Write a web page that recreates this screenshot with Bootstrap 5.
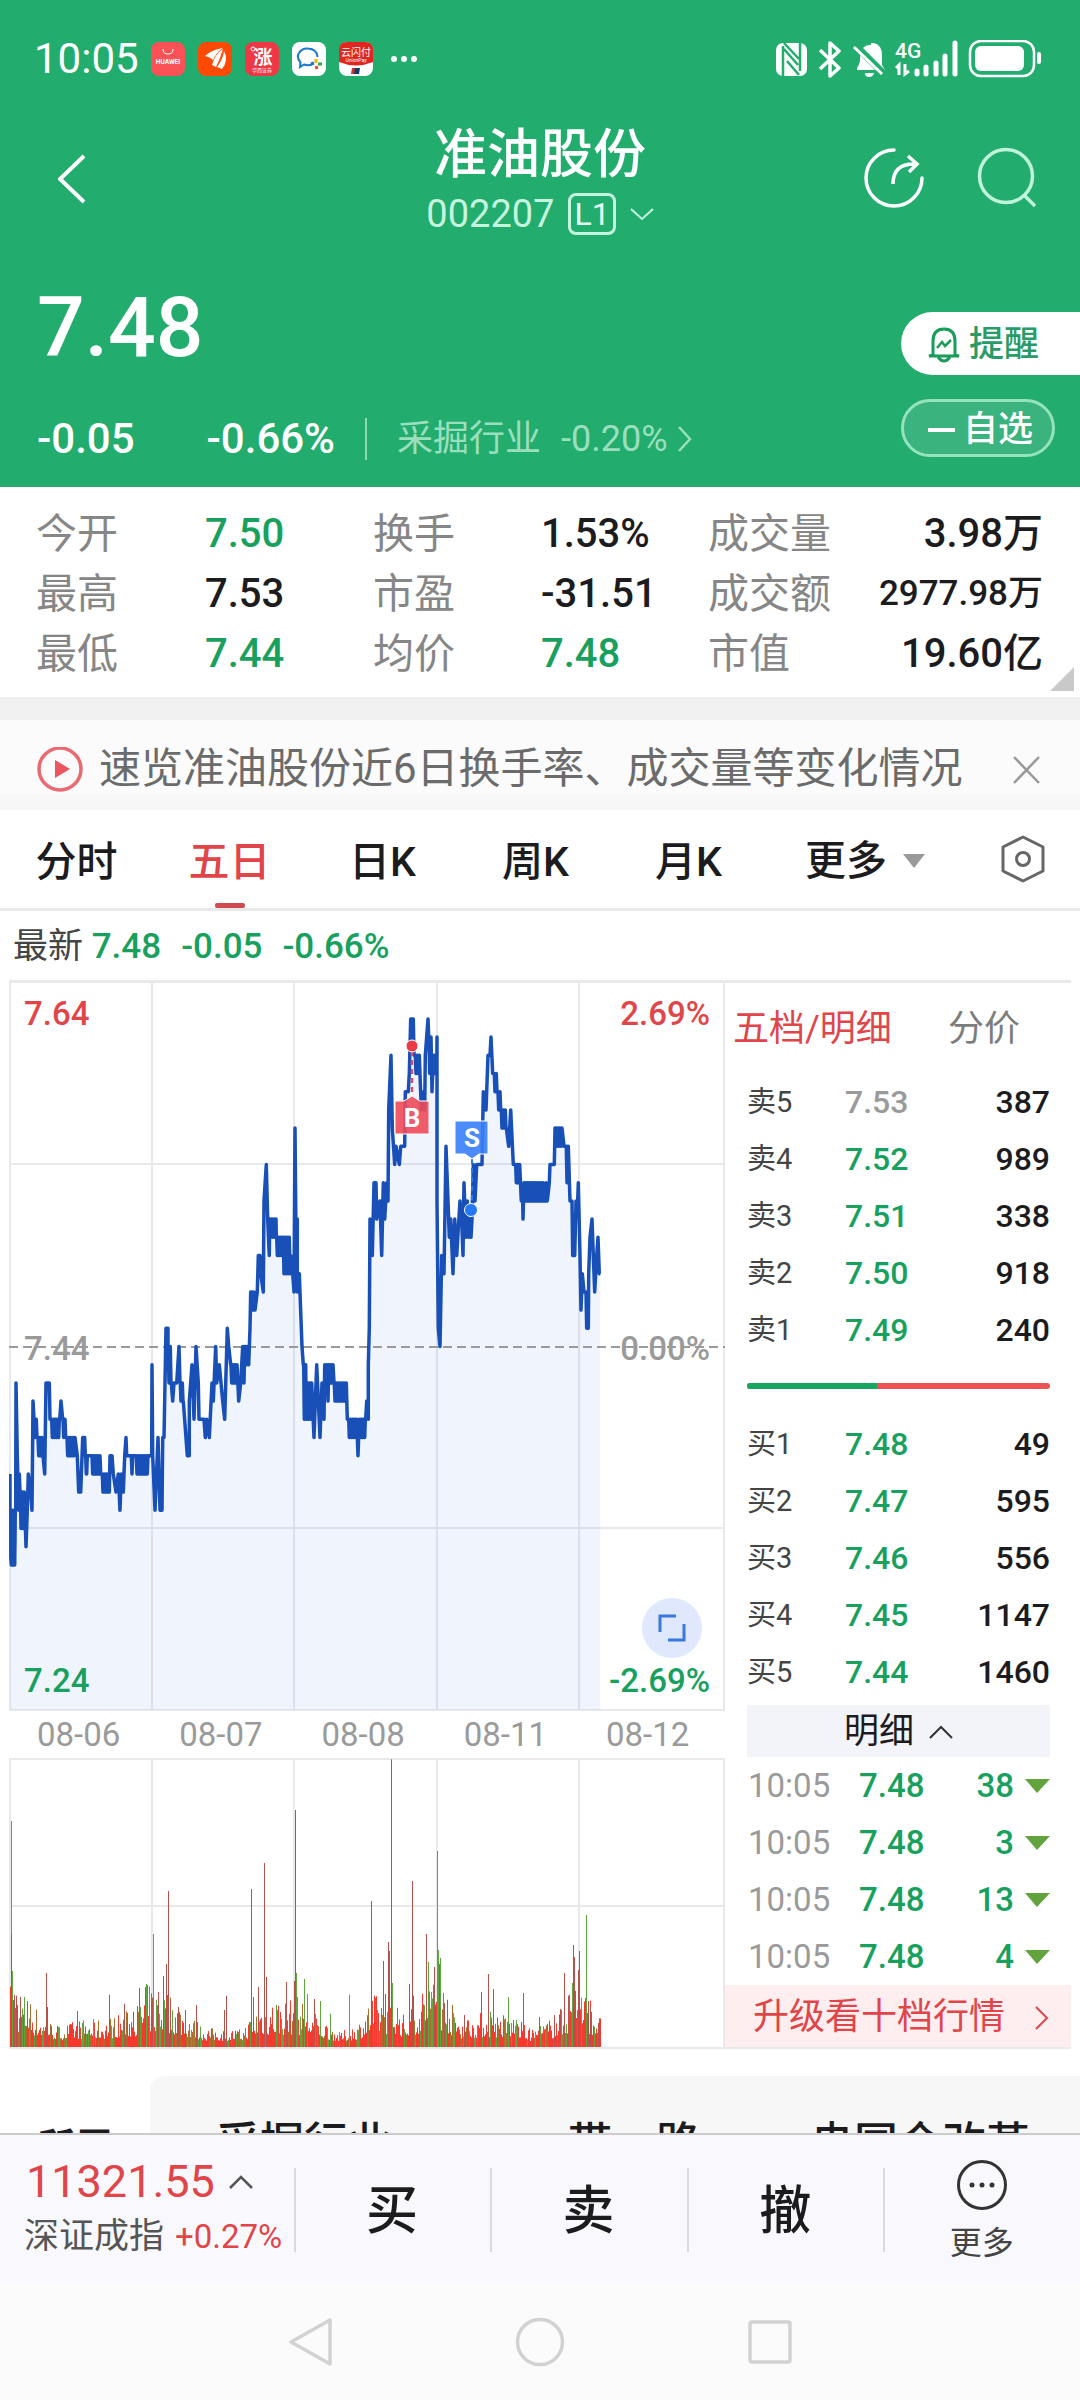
<!DOCTYPE html>
<html lang="zh-CN">
<head>
<meta charset="utf-8">
<meta name="viewport" content="width=device-width, initial-scale=1">
<title>准油股份 002207</title>
<link href="https://cdn.jsdelivr.net/npm/bootstrap@5.3.0/dist/css/bootstrap.min.css" rel="stylesheet">
<style>
:root{--up:#e0454a;--down:#18a05e;--brand:#22ac6e;--line:#e9e9eb;--ink:#1c1c1e}
body{font-family:Roboto,"Noto Sans CJK SC",sans-serif;color:var(--ink);background:#fff;line-height:1.2}
button,a{color:inherit}
button{background:none;border:0;padding:0;line-height:inherit}
svg{display:block;flex:none}
.up{color:var(--up)}.down{color:var(--down)}.dim{color:#9a9a9a}.soft{color:#7c7c7c}.label-ink{color:#444;font-weight:400}
.num{font-weight:500}
.app{height:100vh}
.top-area{background:var(--brand);color:#fff}
.status{height:96px;padding:22px 38px 0 34px;font-size:42px}
.apps{gap:13px;margin-left:12px}
.titlebar{height:176px;padding:0 44px}
.side-l,.side-r{flex:1 1 0;padding-top:50px}
.side-l button{margin:8px 0 0 14px}
.side-r{gap:52px}
.stock-head{padding-top:27px}
.stock-name{font-size:53px;line-height:64px;font-weight:500;margin:0}
.stock-code{font-size:38px;line-height:48px;color:#c6f5df;gap:14px;margin-top:3px}
.level{border:3px solid #c6f5df;border-radius:8px;font-size:32px;line-height:36px;padding:0 3px;color:#e5fff3}
.quote{padding-left:37px;height:215px}
.last-price{font-size:84px;line-height:100px;font-weight:500;margin-top:6px}
.delta{font-size:42px;line-height:50px;margin-top:36px}
.delta-pct{margin-left:72px}
.sector{color:#9adfbd;font-size:36px;margin-left:30px;padding-left:32px;position:relative;gap:20px;text-decoration:none}
.sector::before{content:"";position:absolute;left:0;top:4px;height:42px;border-left:2px solid #8ed9b5}
.sector svg{margin-left:-10px}
.pills{padding-top:40px;gap:24px}
.pill-a{background:#fff;color:#2a9b67;border-radius:32px 0 0 32px;width:179px;height:63px;font-size:35px;padding:2px 0 0 26px;gap:8px;font-weight:500}
.pill-b{border:3px solid #94e3bd;background:#3bb37e;border-radius:30px;width:154px;height:58px;font-size:35px;margin-right:25px;gap:8px;padding:3px 0 0 24px;font-weight:500}
.pill-b i{width:27px;height:4px;background:#fff}
.stats{padding:17px 37px 13px 36px;font-size:40px;grid-template-columns:169px 168px 168px 167px 1fr auto;position:relative}
.stats dt,.stats dd{margin:0;line-height:60px;font-weight:400}
.stats dt{color:#868686;font-size:41px}
.stats dd{font-weight:500}
.stats dd:nth-of-type(3n){text-align:right}
.stats .tight{font-size:35px}
.corner{position:absolute;right:6px;bottom:6px}
.band{height:23px;background:#f0f0f0}
.notice{background:#fbfbfb;border-bottom:15px solid #f7f7f7;height:90px;padding:24px 40px 0 37px;font-size:42px;color:#6b6b6b}
.tabs-row{height:101px;border-bottom:3px solid var(--line);font-size:41px}
.tabs-row button{flex:153 1 0;line-height:104px;height:98px;position:relative;font-weight:500}
.tabs-row .more{flex-grow:200}
.tabs-row .gear{flex-grow:115}
.tabs-row .on::after{content:"";position:absolute;left:50%;margin-left:-15px;bottom:0;width:30px;height:5px;border-radius:2px;background:#d04a50}
.newest{height:69px;padding:3px 13px 0;font-size:35px;gap:20px}
.board{margin:0 9px;border-top:3px solid var(--line);border-bottom:2px solid var(--line)}
.charts{flex:716 1 0;min-width:0}
.book{flex:346 1 0;min-width:0}
.chart-box{position:relative}
.chart-box svg{width:100%;height:auto}
.lbl{position:absolute;font-size:33px;line-height:40px;font-weight:500}
.l{left:15px}.r{right:15px}.t{top:11px}.m{top:346px}.b{bottom:10px}
.full{position:absolute;right:23px;bottom:53px;width:60px;height:60px;border-radius:50%;background:#dfe8fd}
.dates{height:47px;font-size:33px;line-height:48px;color:#9a9a9a}
.dates span{flex:142 1 0;padding-left:28px}
.dates span:last-child{flex-grow:148}
.book-tabs{font-size:36px;height:91px;padding:2px 51px 0 8px}
.depth{width:303px;margin-left:22px;font-size:32px}
.depth td{padding:0;line-height:57px;font-weight:500}
.depth td:first-child{width:98px;color:#444;font-size:29px;font-weight:400}
.depth td:last-child{text-align:right}
.balance{height:6px;border-radius:3px;margin:24px 21px 27px 22px;background:#ee5253}
.balance div{background:#18a560}
.ticks-head{background:#f3f4f9;height:52px;margin:4px 21px 0 22px;padding-top:2px;font-size:35px;gap:15px;width:303px}
.ticks{margin:0 21px 0 23px;font-size:33px;width:302px}
.ticks td{padding:0;line-height:57px;font-weight:500}
.ticks td:first-child{width:111px;font-weight:400}
.ticks td:nth-child(3){text-align:right}
.ticks td:last-child{width:36px}
.upgrade{background:#feeeef;height:62px;font-size:36px;padding:4px 22px 0 28px;text-decoration:none}
.related{margin-top:27px}
.related h2{width:150px;font-size:38px;line-height:46px;padding:48px 0 0 37px;font-weight:700;margin:0}
.related ul{background:#f7f7f7;border-radius:14px 0 0 0;font-size:44px;line-height:60px;padding:38px 6px 0 0;font-weight:500;margin:0}
.related li{flex:1 1 0;text-align:center;white-space:nowrap}
.trade{background:#f9f9fd;border-top:2px solid #ccc;height:150px}
.trade .idx{flex:0 0 27.2%;padding:19px 0 0 24px}
.idx-v{font-size:45px;line-height:55px;gap:14px;padding-left:2px}
.idx-n{font-size:35px;line-height:55px;gap:11px;color:#555}
.idx-n .up{font-size:33px}
.trade .act{flex:197 1 0;font-size:52px;position:relative;font-weight:500;padding-top:6px}
.trade .act::before{content:"";position:absolute;left:0;top:33px;height:84px;border-left:2px solid #dadade}
.trade .act.small-act{font-size:32px;line-height:40px;color:#444;gap:12px;font-weight:400;padding-top:4px}
.sysnav{background:#fbfbfb;height:117px;padding:0 287px}
</style>
</head>
<body>
<div class="app d-flex flex-column overflow-hidden">
<header class="top-area">
  <div class="status d-flex align-items-center">
    <span>10:05</span>
    <div class="apps d-flex">
      <svg width="34" height="34" viewBox="0 0 34 34"><rect width="34" height="34" rx="8" fill="#fb5257"/><path d="M12 7q0 5 5 5t5-5" fill="none" stroke="#fff" stroke-width="1"/><text x="17" y="22" font-size="6.5" font-weight="700" fill="#fff" text-anchor="middle">HUAWEI</text></svg>
      <svg width="34" height="34" viewBox="0 0 34 34"><rect width="34" height="34" rx="8" fill="#ff4a06"/><path d="M7 14Q15 7 25 6Q18 11 15 18Q12 15 7 14" fill="#fff"/><path d="M14 23Q17 12 25 7Q22 17 18 25Z" fill="#fff"/><path d="M19 25Q25 17 26 9Q31 18 24 27Z" fill="#fff"/></svg>
      <svg width="34" height="34" viewBox="0 0 34 34"><rect width="34" height="34" rx="8" fill="#ee3846"/><text x="18" y="22" font-size="19" font-weight="700" fill="#fff" text-anchor="middle">涨</text><circle cx="8" cy="7" r="2" fill="none" stroke="#fff"/><text x="17" y="30" font-size="5" fill="#fff" text-anchor="middle">华西证券</text></svg>
      <svg width="34" height="34" viewBox="0 0 34 34"><rect width="34" height="34" rx="8" fill="#fff"/><path d="M20 22.500Q16 24 12 22.500L8 25L8.500 20.500Q4 15 7 11Q10 6 16 6.500Q25 7 25.500 15" fill="none" stroke="#1878cd" stroke-width="2"/><path d="M24 17v4" stroke="#f8b400" stroke-width="3"/><path d="M26 22h4" stroke="#33a852" stroke-width="3"/><path d="M24 24l1 3" stroke="#ef4a31" stroke-width="3"/><path d="M19 22l3-1" stroke="#1878cd" stroke-width="3"/></svg>
      <svg width="34" height="34" viewBox="0 0 34 34"><rect width="34" height="34" rx="8" fill="#fff"/><path d="M8 0h18q8 0 8 8v12q-17 7-34 0V8q0-8 8-8" fill="#e0261f"/><text x="17" y="14" font-size="10" fill="#fff" text-anchor="middle">云闪付</text><text x="17" y="20" font-size="5" fill="#fff" text-anchor="middle">UnionPay</text><path d="M13 26h4l-1 6h-4z" fill="#c33"/><path d="M16 26h5l-1 6h-5z" fill="#123a6b"/></svg>
    </div>
    <svg class="ms-3" width="30" height="8"><g fill="#fff"><circle cx="5" cy="4" r="3"/><circle cx="15" cy="4" r="3"/><circle cx="25" cy="4" r="3"/></g></svg>
    <svg class="ms-auto" width="266" height="38" viewBox="776 39 266 38">
      <rect x="776" y="42" width="31" height="33" rx="7" fill="#fff"/><path d="M783 45V75M784 48L798 64M787 60L799 74M784 42L799 58M800 42V70" stroke="#22ac6e" stroke-width="2.500" fill="none"/>
      <path d="M820 49L839 67L830 75V42L839 50L820 68" fill="none" stroke="#fff" stroke-width="3.500" stroke-linejoin="round"/>
      <path d="M857 69V67Q861 62 860 53Q863 43 871 44V42H874Q882 44 882 54V64L885 69Z" fill="#fff"/><path d="M853 42L886 75" stroke="#22ac6e" stroke-width="7"/><path d="M854 46L882 73" stroke="#fff" stroke-width="3"/><path d="M865 72h9q-1 4-5 4t-4-4" fill="#fff"/>
      <text x="895" y="57" font-size="21" font-weight="500" fill="#fff">4G</text>
      <path d="M899 74V64L896 67M905 63V73L909 70" stroke="#fff" stroke-width="3" fill="none"/>
      <path d="M917 70V73M926 66V73M936 62V73M945 55V73M955 42V73" stroke="#fff" stroke-width="5" stroke-linecap="round"/>
      <rect x="970" y="40" width="64" height="35" rx="11" fill="none" stroke="#fff" stroke-width="2.500"/><rect x="975" y="45" width="49" height="25" rx="6" fill="#fff"/><path d="M1039 53V61" stroke="#fff" stroke-width="4" stroke-linecap="round"/>
    </svg>
  </div>
  <div class="titlebar d-flex align-items-start">
    <div class="side-l"><button aria-label="返回"><svg width="28" height="50" viewBox="0 0 28 50"><path d="M26 2L2 25L26 48" fill="none" stroke="#fff" stroke-width="4"/></svg></button></div>
    <div class="stock-head text-center">
      <h1 class="stock-name">准油股份</h1>
      <div class="stock-code d-flex align-items-center justify-content-center"><span>002207</span><span class="level">L1</span><svg width="24" height="14" viewBox="0 0 24 14"><path d="M1 2L12 12L23 2" fill="none" stroke="#c6f5df" stroke-width="2"/></svg></div>
    </div>
    <div class="side-r d-flex justify-content-end">
      <button aria-label="分享"><svg width="60" height="62" viewBox="0 0 60 62"><path d="M30 4A28 28 0 1 0 58 32" fill="none" stroke="#fff" stroke-width="3.500" stroke-linecap="round"/><path d="M29 38Q29 18 50 18M44 10L53 18L45 26" fill="none" stroke="#fff" stroke-width="3.500"/></svg></button>
      <button aria-label="搜索"><svg width="60" height="62" viewBox="0 0 60 62"><circle cx="30" cy="30" r="26.500" fill="none" stroke="#bff3da" stroke-width="3.500"/><path d="M49 50L59 60" stroke="#bff3da" stroke-width="3.500"/></svg></button>
    </div>
  </div>
  <div class="quote d-flex">
    <div class="flex-grow-1">
      <div class="last-price">7.48</div>
      <div class="delta d-flex">
        <span class="num">-0.05</span><span class="num delta-pct">-0.66%</span>
        <a class="sector d-flex align-items-center" href="#sector"><span>采掘行业</span><span>-0.20%</span><svg width="14" height="26" viewBox="0 0 14 26"><path d="M1 1L12 13L1 25" fill="none" stroke="#9adfbd" stroke-width="2.500"/></svg></a>
      </div>
    </div>
    <div class="pills d-flex flex-column">
      <button class="pill-a d-flex align-items-center"><svg width="34" height="36" viewBox="0 0 34 36"><path d="M6 28V14Q6 2 17 2T28 14V28L32 29H2L6 28" fill="none" stroke="#1b9c5d" stroke-width="3"/><path d="M11 30Q17 38 23 30" fill="none" stroke="#1b9c5d" stroke-width="3"/><path d="M10 21L15 15L18 19L24 13" fill="none" stroke="#1b9c5d" stroke-width="2.500"/></svg>提醒</button>
      <button class="pill-b d-flex align-items-center"><i></i>自选</button>
    </div>
  </div>
</header>
<main class="flex-fill overflow-hidden">
  <dl class="stats d-grid mb-0">
    <dt>今开</dt><dd class="down">7.50</dd><dt>换手</dt><dd>1.53%</dd><dt>成交量</dt><dd>3.98万</dd>
    <dt>最高</dt><dd>7.53</dd><dt>市盈</dt><dd>-31.51</dd><dt>成交额</dt><dd class="tight">2977.98万</dd>
    <dt>最低</dt><dd class="down">7.44</dd><dt>均价</dt><dd class="down">7.48</dd><dt>市值</dt><dd>19.60亿</dd>
    <svg class="corner" width="24" height="24"><path d="M24 0V24H0Z" fill="#c9c9c9"/></svg>
  </dl>
  <div class="band"></div>
  <div class="notice d-flex align-items-center">
    <svg width="46" height="46" viewBox="0 0 46 46"><circle cx="23" cy="22" r="21" fill="none" stroke="#ea6a72" stroke-width="3.500"/><path d="M18 13L33 22L18 31Z" fill="#ea5560"/></svg>
    <span class="ms-3">速览准油股份近6日换手率、成交量等变化情况</span>
    <button class="ms-auto" aria-label="关闭"><svg width="27" height="28" viewBox="0 0 27 28"><path d="M1 1L26 27M26 1L1 27" stroke="#999" stroke-width="2.500"/></svg></button>
  </div>
  <nav class="tabs-row d-flex">
    <button>分时</button><button class="on up">五日</button><button>日K</button><button>周K</button><button>月K</button>
    <button class="more d-flex align-items-center justify-content-center pt-1">更多<svg class="ms-3" width="22" height="14"><path d="M0 0H22L11 14Z" fill="#999"/></svg></button>
    <button class="gear d-flex align-items-center justify-content-center" aria-label="设置"><svg width="44" height="48" viewBox="0 0 44 48"><path d="M22 2L42 12V36L22 46L2 36V12Z" fill="none" stroke="#666" stroke-width="3" stroke-linejoin="round"/><circle cx="22" cy="24" r="6.500" fill="none" stroke="#666" stroke-width="3"/></svg></button>
  </nav>
  <div class="newest d-flex align-items-center down num"><span><span class="label-ink">最新</span>&nbsp;7.48</span><span>-0.05</span><span>-0.66%</span></div>
  <section class="board d-flex">
    <div class="charts">
      <div class="chart-box">
        <svg viewBox="9 982 716 728" id="price">
          <path d="M10 982V1709M152 982V1709M294 982V1709M437 982V1709M579 982V1709M724 982V1709M9 1163H725M9 1527H725M9 1709H725" stroke="#e9e9eb" stroke-width="2" fill="none"/>
          <path id="area" fill="#2a6fe8" fill-opacity=".075"/>
          <path d="M9 1346H725" stroke="#9a9a9a" stroke-width="2" stroke-dasharray="9 5"/>
          <path id="line" fill="none" stroke="#1850b8" stroke-width="3.500" stroke-linejoin="round"/>
          <path d="M412 1050V1096" stroke="#d54f6c" stroke-width="2.500" stroke-dasharray="5 4"/><circle cx="412" cy="1045" r="6" fill="#ee3a45" stroke="#fff"/>
          <path d="M395 1100H404L412 1095L420 1100H429V1133H395Z" fill="#ee4a5a" fill-opacity=".9" stroke="#fff"/><text x="412" y="1126" font-size="26" font-weight="700" fill="#fff" text-anchor="middle">B</text>
          <path d="M472 1158V1204" stroke="#2a78f0" stroke-width="2" stroke-dasharray="5 4"/><circle cx="471" cy="1209" r="6.500" fill="#2378f5" stroke="#fff"/>
          <path d="M455 1120H488V1153H479L472 1158L465 1153H455Z" fill="#3880fa" fill-opacity=".9" stroke="#fff"/><text x="472" y="1146" font-size="26" font-weight="700" fill="#fff" text-anchor="middle">S</text>
        </svg>
        <span class="lbl l t up">7.64</span><span class="lbl r t up">2.69%</span>
        <span class="lbl l m dim">7.44</span><span class="lbl r m dim">0.00%</span>
        <span class="lbl l b down">7.24</span><span class="lbl r b down">-2.69%</span>
        <button class="full d-flex align-items-center justify-content-center px-3" aria-label="全屏"><svg viewBox="0 0 28 28"><path d="M2 18V2H18M10 26H26V10" fill="none" stroke="#3a78e0" stroke-width="3"/></svg></button>
      </div>
      <div class="dates d-flex"><span>08-06</span><span>08-07</span><span>08-08</span><span>08-11</span><span>08-12</span></div>
      <div class="chart-box"><svg viewBox="9 1757 716 289">
        <path d="M9 1758H725M9 1905H725M10 1757V2046M152 1757V2046M294 1757V2046M437 1757V2046M579 1757V2046M724 1757V2046" stroke="#e9e9eb" stroke-width="2" fill="none"/>
        <path id="volUp" fill="none" stroke="#f5392f"/><path id="volMix" fill="none" stroke="#a8702a"/><path id="volDn" fill="none" stroke="#5da53c"/><path id="volPeak" fill="none" stroke="#b8504a"/>
      </svg></div>
    </div>
    <div class="book">
      <div class="book-tabs d-flex justify-content-between align-items-center"><button class="up">五档/明细</button><button class="soft">分价</button></div>
      <table class="depth">
        <tr><td>卖5</td><td class="dim">7.53</td><td>387</td></tr>
        <tr><td>卖4</td><td class="down">7.52</td><td>989</td></tr>
        <tr><td>卖3</td><td class="down">7.51</td><td>338</td></tr>
        <tr><td>卖2</td><td class="down">7.50</td><td>918</td></tr>
        <tr><td>卖1</td><td class="down">7.49</td><td>240</td></tr>
      </table>
      <div class="balance progress"><div style="width:43%"></div></div>
      <table class="depth">
        <tr><td>买1</td><td class="down">7.48</td><td>49</td></tr>
        <tr><td>买2</td><td class="down">7.47</td><td>595</td></tr>
        <tr><td>买3</td><td class="down">7.46</td><td>556</td></tr>
        <tr><td>买4</td><td class="down">7.45</td><td>1147</td></tr>
        <tr><td>买5</td><td class="down">7.44</td><td>1460</td></tr>
      </table>
      <button class="ticks-head d-flex align-items-center justify-content-center">明细<svg width="24" height="14" viewBox="0 0 24 14"><path d="M1 13L12 2L23 13" fill="none" stroke="#333" stroke-width="2"/></svg></button>
      <table class="ticks down">
        <tr><td class="dim">10:05</td><td>7.48</td><td>38</td><td><svg class="ms-auto" width="25" height="14"><path d="M0 0H25L12 14Z" fill="#62a33e"/></svg></td></tr>
        <tr><td class="dim">10:05</td><td>7.48</td><td>3</td><td><svg class="ms-auto" width="25" height="14"><path d="M0 0H25L12 14Z" fill="#62a33e"/></svg></td></tr>
        <tr><td class="dim">10:05</td><td>7.48</td><td>13</td><td><svg class="ms-auto" width="25" height="14"><path d="M0 0H25L12 14Z" fill="#62a33e"/></svg></td></tr>
        <tr><td class="dim">10:05</td><td>7.48</td><td>4</td><td><svg class="ms-auto" width="25" height="14"><path d="M0 0H25L12 14Z" fill="#62a33e"/></svg></td></tr>
      </table>
      <a class="upgrade up d-flex align-items-center justify-content-between" href="#upgrade">升级看十档行情<svg width="14" height="24" viewBox="0 0 14 24"><path d="M1 1L12 12L1 23" fill="none" stroke="#d9484e" stroke-width="2"/></svg></a>
    </div>
  </section>
  <section class="related d-flex">
    <h2>所属</h2>
    <ul class="list-unstyled flex-fill d-flex"><li>采掘行业</li><li>一带一路</li><li>央国企改革</li></ul>
  </section>
</main>
<footer>
  <div class="trade d-flex">
    <button class="idx d-flex flex-column align-items-start justify-content-start">
      <span class="idx-v up d-flex align-items-center">11321.55<svg width="24" height="14" viewBox="0 0 24 14"><path d="M1 13L12 2L23 13" fill="none" stroke="#555" stroke-width="2.500"/></svg></span>
      <span class="idx-n d-flex align-items-center">深证成指<span class="up">+0.27%</span></span>
    </button>
    <button class="act">买</button><button class="act">卖</button><button class="act">撤</button>
    <button class="act small-act d-flex flex-column align-items-center justify-content-center"><svg width="52" height="52" viewBox="0 0 52 52"><circle cx="26" cy="26" r="23.500" fill="none" stroke="#333" stroke-width="3"/><g fill="#333"><circle cx="16" cy="26" r="2.500"/><circle cx="26" cy="26" r="2.500"/><circle cx="36" cy="26" r="2.500"/></g></svg>更多</button>
  </div>
  <div class="sysnav d-flex justify-content-between align-items-center">
    <button aria-label="后退"><svg width="46" height="50" viewBox="0 0 46 50"><path d="M43 3V47L4 25Z" fill="none" stroke="#d2d2d2" stroke-width="3.500" stroke-linejoin="round"/></svg></button>
    <button aria-label="主页"><svg width="50" height="50" viewBox="0 0 50 50"><circle cx="25" cy="25" r="22.500" fill="none" stroke="#d2d2d2" stroke-width="3.500"/></svg></button>
    <button aria-label="任务"><svg width="46" height="50" viewBox="0 0 46 50"><rect x="3" y="5" width="40" height="40" rx="2" fill="none" stroke="#d2d2d2" stroke-width="3.500"/></svg></button>
  </div>
</footer>
</div>
<script src="https://cdn.jsdelivr.net/npm/bootstrap@5.3.0/dist/js/bootstrap.bundle.min.js"></script>
<script>
// Price series: "x,level" is one tick; "x1-x2,low,high" is a stretch that flickers between two levels.
// x is in thirds of a unit, a level is one cent away from the 7.44 base line.
const series = `30,-7 30,-11 34,-12 34-46,-12,-9 48,-2 52,-6 56,-9 58,-7 60-72,-10,-8 78,-11 82,-9 85,-7 92,-8 96,-9 99,-3 102-112,-5,-4 113-130,-6,-5 134,-7 138,-2 148,-2 150,-4 154-180,-5,-4 183,-3 188-197,-5,-4 200-226,-6,-5 232,-6 236,-8 242,-8 248,-5 254,-5 256-264,-7,-6 275-304,-7,-6 306-328,-8,-7 330,-6 336,-6 340,-7 348,-8 355,-7 360,-9 364,-7 370,-8 374,-6 378,-5 380,-6 394,-6 396,-7 398,-6 408-446,-7,-6 455,-6 456,-1 458,-6 465,-9 474,-5 480,-9 486,-9 488,-5 492,-5 498,1 504,1 504-515,-2,0 518,-3 522,-2 530,-2 537,0 540-550,-3,-2 562,-6 568,-6 568,-3 576,-1 582,-4 588,0 595,-2 597,-4 612,-4 616,-5 620,-4 628,-5 636,-2 640,-3 647,0 650,-2 658,-1 668,-3 674,-4 682,1 686,0 692-710,-2,-1 716,-3 722,-2 728-734,-2,0 736-745,-1,0 750,1 752,3 755-765,2,3 772,3 775,5 780,5 782,4 790,3 792,8 799,10 803,7 808,5 809-828,6,7 829-848,5,6 849-870,4,6 872,5 878,4 882,3 885,12 888,6 892,7 892,3 898,4 906,0 910-920,-4,-1 922-935,-4,-2 942,-5 950,-1 960,-5 966,-2 972,-4 974-982,-2,-1 984,-3 986-998,-2,-1 1002-1040,-3,-2 1042,-4 1045-1070,-5,-4 1074,-6 1078-1098,-5,-4 1100,-3 1105,-4 1105,-1 1108,1 1110,7 1117,5 1122,9 1128,9 1130,7 1140,8 1145,5 1150,9 1154,7 1160,9 1164,8 1166,13 1173,16 1177,12 1184,10 1188,11 1198,10 1202,11 1214,11 1216,14 1225,14 1228,15 1232,18 1240,18 1242,16 1245-1258,15,16 1264,13 1270,14 1274,13 1276,16 1284,18 1286-1294,15,17 1296,14 1300-1310,15,16 1311,17 1311,8 1315,1 1320,0 1325,5 1332,4 1338,11 1344,8 1348,6 1352,7 1359,4 1364,7 1370,5 1380,8 1385,7 1389,5 1392,9 1398,6 1402,8 1403-1412,6,7 1416,7 1420,10 1425,8 1430,10 1446,10 1450,14 1458,13 1464,16 1470,16 1473,17 1478,15 1482-1492,14,15 1493-1502,13,14 1503-1520,12,13 1526,11 1532,13 1540,10 1546-1560,9,10 1564,8 1568,8 1569,7 1572,9 1574-1633,8,9 1636,8 1638,9 1642,8 1648,9 1650,10 1663,10 1665,12 1667-1687,11,12 1692,11 1698-1704,9,11 1710,8 1716,8 1718,5 1724,5 1728,8 1733,8 1735,9 1740,5 1743,2 1747,4 1752,3 1758,3 1760,1 1765,1 1766,4 1770,6 1776,7 1780,5 1784,3 1790,5 1794,6 1798,4 1801,4`;
const pts = [];
const put = (x, k) => pts.push((x / 3).toFixed(1) + ' ' + (1345.5 - 18.2 * k).toFixed(1));
for (const token of series.split(' ')) {
  const [range, lo, hi] = token.split(/,/);
  if (hi === undefined) { put(+range, +lo); continue; }
  const [a, b] = range.split('-').map(Number);
  for (let x = a, up = true; x <= b; x += 3, up = !up) { put(x, up ? +hi : +lo); put(x + 1, up ? +hi : +lo); }
}
line.setAttribute('d', 'M' + pts.join('L'));
area.setAttribute('d', 'M' + pts.join('L') + 'V1709H10Z');

// Volume: notable bars as position, top and colour; the rest follow a low envelope.
const peaks = `25,390,g 24,727,r 27,840,g 31,912,r 35,914,r 45,918,r 59,930,r 100,846,r 101,948,r 166,960,r 235,911,r 267,938,r 286,962,r 300,891,r 312,888,r 315,879,g 329,729,g 327,920,r 340,903,r 351,855,r 358,819,r 362,600,r 367,930,r 383,948,r 398,957,r 422,942,r 486,914,r 482,957,r 540,594,r 555,888,r 545,918,r 568,516,r 572,858,r 594,942,g 615,873,r 635,357,r 632,870,r 637,846,g 640,918,g 654,864,g 660,909,g 675,924,r 688,930,g 710,968,g 751,911,g 797,657,r 798,630,r 824,810,r 828,909,r 834,753,r 837,780,r 841,205,r 843,876,g 880,879,r 886,570,r 888,914,r 916,729,r 920,813,g 927,903,g 934,828,r 940,480,g 942,777,g 946,801,g 944,819,r 955,938,r 961,926,r 998,972,r 1034,903,r 1049,849,r 1053,962,g 1060,894,r 1092,918,g 1109,987,g 1124,906,r 1159,978,r 1192,972,r 1204,954,r 1213,846,r 1222,914,r 1232,762,r 1234,798,r 1230,876,g 1237,900,r 1243,837,r 1245,780,r 1250,920,g 1260,672,g 1264,930,r 1268,948,r 1285,996,r`;
const envelope = [[22,190],[60,150],[95,80],[130,55],[170,75],[220,75],[290,110],[315,180],[365,160],[420,75],[440,50],[520,45],[560,130],[630,140],[650,130],[700,70],[730,35],[770,65],[800,150],[850,150],[870,80],[900,150],[940,240],[960,150],[990,80],[1040,100],[1100,90],[1140,45],[1180,75],[1210,110],[1230,210],[1260,170],[1291,80]];
let seed = 7;
const rnd = () => (seed = (seed * 16807) % 2147483647) / 2147483647;
const bars = { r: '', m: '', g: '', p: '' };
const bar = (kind, x, h) => { bars[kind] += `M${x.toFixed(1)} 2046V${(2046 - h).toFixed(1)}`; };
for (let x = 10.5; x < 601; x++) {
  const c = x * 2.148;
  let i = 1;
  while (i < envelope.length - 1 && envelope[i][0] < c) i++;
  const [x0, y0] = envelope[i - 1], [x1, y1] = envelope[i];
  const env = (y0 + (y1 - y0) * (c - x0) / (x1 - x0)) / 3;
  const pick = rnd();
  bar(pick < .66 ? 'r' : pick < .86 ? 'm' : 'g', x, 3 + env * (.2 + .8 * Math.pow(rnd(), 1.5)));
}
for (const p of peaks.split(' ')) {
  const [x, y, kind] = p.split(',');
  bar(kind === 'g' ? 'g' : 'p', Math.floor(x / 2.148) + .5, (1068 - y) / 3);
}
volUp.setAttribute('d', bars.r); volMix.setAttribute('d', bars.m);
volDn.setAttribute('d', bars.g); volPeak.setAttribute('d', bars.p);
</script>
</body>
</html>
